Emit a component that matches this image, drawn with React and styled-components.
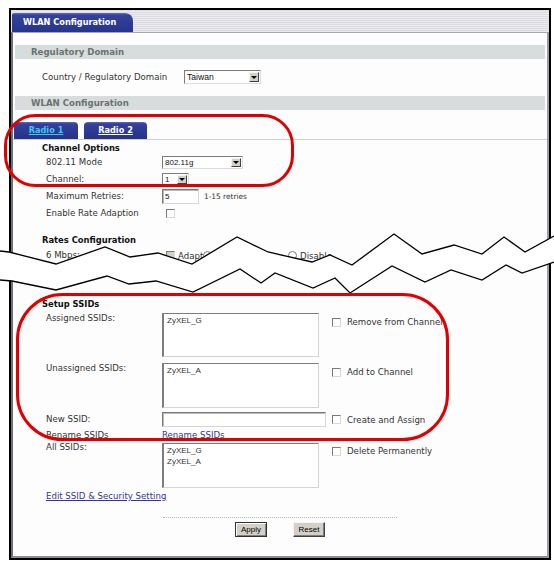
import styled, { createGlobalStyle } from 'styled-components';

const GlobalStyle = createGlobalStyle`
  html, body {
    margin: 0;
    padding: 0;
    background: #fff;
  }
  body {
    font-family: "DejaVu Sans", Verdana, sans-serif;
  }
`;

const Page = styled.div`
  position: relative;
  width: 554px;
  height: 562px;
  overflow: hidden;
  background: #fff;
  padding-top: 8px;
  box-sizing: border-box;
`;

const Frame = styled.div`
  margin-left: 9px;
  width: 542px;
  height: 552px;
  box-sizing: border-box;
  border: 2px solid #000;
  display: flex;
  flex-direction: column;
`;

const TabStrip = styled.div`
  height: 22px;
  flex: none;
  background: repeating-linear-gradient(#dcdce2 0 1px, #ebebef 1px 2px);
  display: flex;
  align-items: flex-end;
  padding-left: 1px;
`;

const MainTab = styled.div`
  width: 121px;
  height: 19px;
  box-sizing: border-box;
  padding-left: 11px;
  color: #fff;
  font-weight: bold;
  font-size: 8.2px;
  line-height: 19px;
  background: linear-gradient(#6671be 0, #35429c 2px, #27348b 100%);
  border-radius: 2px 8px 0 0;
`;

const Panel = styled.div`
  flex: 1;
  border-top: 1px solid #a8a8b0;
  border-left: 2px solid #6f6f78;
  border-right: 2px solid #9c9ca4;
  border-bottom: 2px solid #8c8c94;
  background: #fdfdfd;
  display: flex;
  flex-direction: column;
`;

const Band = styled.div`
  margin: ${(p) => p.$top}px 2px 0;
  height: 14px;
  line-height: 14px;
  padding-left: 16px;
  background: #d7dddd;
  color: #6b7272;
  font-weight: bold;
  font-size: 8.6px;
`;

const CountryRow = styled.div`
  margin-top: 11px;
  height: 14px;
  display: flex;
  align-items: center;
  padding-left: 29px;
`;

const Label = styled.span`
  width: ${(p) => p.$w || 116}px;
  flex: none;
  font-size: 8.6px;
  line-height: 11px;
  color: #333;
  white-space: nowrap;
  margin-top: ${(p) => p.$top || 0}px;
`;

const TabRow = styled.div`
  margin-top: 12px;
  height: 17px;
  display: flex;
  gap: 6px;
  padding-left: 1px;
  border-bottom: 1px solid #cfcfd4;
`;

const RadioTab = styled.div`
  width: ${(p) => p.$w}px;
  height: 17px;
  border-radius: 4px 4px 0 0;
  background: linear-gradient(#5f6ab8 0, #34409a 2px, #26338a 100%);
  color: ${(p) => (p.$active ? '#3cc6f4' : '#fff')};
  font-weight: bold;
  font-size: 8.2px;
  line-height: 17px;
  text-align: center;
  text-decoration: underline;
`;

const GroupTitle = styled.div`
  margin-top: ${(p) => p.$top}px;
  padding-left: 29px;
  font-weight: bold;
  font-size: 8.4px;
  line-height: 11px;
  color: #111;
`;

const FieldRow = styled.div`
  display: grid;
  grid-template-columns: 116px 170px 1fr;
  align-items: ${(p) => p.$align || 'center'};
  padding-left: 33px;
  height: ${(p) => p.$h}px;
  margin-top: ${(p) => p.$top || 0}px;
`;

const Value = styled.div`
  display: flex;
  align-items: center;
  gap: ${(p) => p.$gap || 0}px;
  padding-left: ${(p) => p.$pad || 0}px;
`;

const Select = styled.div`
  width: ${(p) => p.$w}px;
  height: ${(p) => p.$h}px;
  box-sizing: border-box;
  border: 1px solid;
  border-color: #7c7c7c #dcdcdc #dcdcdc #7c7c7c;
  background: #fff;
  display: flex;
  align-items: center;
  justify-content: space-between;
  padding-left: 2px;
  font-family: "Liberation Sans", Arial, sans-serif;
  font-size: ${(p) => p.$fs || 8}px;
  color: #111;
`;

const Arrow = styled.span`
  width: 10px;
  height: calc(100% - 2px);
  margin-right: 1px;
  box-sizing: border-box;
  background: #d4d0c8;
  border: 1px solid;
  border-color: #f4f4f4 #404040 #404040 #f4f4f4;
  display: flex;
  align-items: center;
  justify-content: center;

  &::after {
    content: '';
    border-left: 3px solid transparent;
    border-right: 3px solid transparent;
    border-top: 3px solid #000;
  }
`;

const TextBox = styled.div`
  width: ${(p) => p.$w}px;
  height: 15px;
  box-sizing: border-box;
  border: 1px solid;
  border-color: #7a7a7a #d6d6d6 #d6d6d6 #7a7a7a;
  box-shadow: inset 1px 1px 0 #b8b8b8;
  background: #fff;
  padding-left: 2px;
  font-family: "Liberation Sans", Arial, sans-serif;
  font-size: 8px;
  line-height: 13px;
  color: #111;
`;

const Hint = styled.span`
  font-size: 7.4px;
  color: #333;
`;

const Check = styled.span`
  width: 9px;
  height: 9px;
  flex: none;
  box-sizing: border-box;
  border: 1px solid;
  border-color: #7a7a7a #d8d8d8 #d8d8d8 #7a7a7a;
  background: ${(p) => (p.$off ? '#d4d0c8' : '#fff')};
  margin-top: ${(p) => p.$top || 0}px;
`;

const Radio = styled.span`
  width: 9px;
  height: 9px;
  flex: none;
  box-sizing: border-box;
  border-radius: 50%;
  border: 1px solid #7a7a7a;
  background: #fff;
`;

const OptText = styled.span`
  font-size: 8.6px;
  color: #333;
  white-space: nowrap;
  width: ${(p) => (p.$w ? `${p.$w}px` : 'auto')};
`;

const Option = styled.div`
  display: flex;
  align-items: center;
  gap: 6px;
  margin-top: ${(p) => p.$top || 0}px;
`;

const ListBox = styled.div`
  width: 157px;
  height: ${(p) => p.$h}px;
  box-sizing: border-box;
  border-style: solid;
  border-width: 1px 1px 1px 2px;
  border-color: #7c7c7c #d4d4d4 #d4d4d4 #7c7c7c;
  background: #fff;
  padding: 2px 3px;
  font-family: "Liberation Sans", Arial, sans-serif;
  font-size: 8px;
  line-height: 10.5px;
  color: #333;
`;

const Link = styled.a`
  font-size: 8.6px;
  line-height: 11px;
  color: #34349a;
  text-decoration: underline;
  white-space: nowrap;
`;

const EditRow = styled.div`
  margin-top: 0;
  padding-left: 33px;
  line-height: 11px;
`;

const Divider = styled.div`
  margin: 15px 0 0 150px;
  width: 234px;
  border-top: 1px dotted #b4b4b4;
`;

const ButtonRow = styled.div`
  margin-top: 4px;
  display: flex;
  justify-content: center;
  gap: 26px;
`;

const Button = styled.div`
  width: 32px;
  height: 15px;
  box-sizing: border-box;
  background: #d4d0c8;
  border: 1px solid;
  border-color: ${(p) => (p.$default ? '#303030' : '#f4f4f4 #404040 #404040 #f4f4f4')};
  box-shadow: ${(p) => (p.$default ? 'inset 1px 1px 0 #fff, inset -1px -1px 0 #808080' : 'inset -1px -1px 0 #808080')};
  font-family: "Liberation Sans", Arial, sans-serif;
  font-size: 8px;
  line-height: 13px;
  text-align: center;
  color: #000;
`;

const Overlay = styled.svg`
  position: absolute;
  left: 0;
  top: 0;
  pointer-events: none;
`;

const upper = [[0, 251], [9, 252], [56, 264], [105, 247], [130, 257], [158, 253], [192, 264], [237, 237], [268, 252], [312, 262], [330, 255], [352, 265], [394, 234], [422, 254], [454, 245], [482, 254], [504, 237], [525, 252], [554, 236]];
const lower = [[0, 280], [12, 281], [56, 290], [107, 276], [129, 284], [156, 281], [193, 292], [240, 269], [261, 283], [275, 273], [313, 288], [335, 278], [350, 293], [392, 266], [425, 282], [451, 270], [482, 280], [506, 265], [522, 273], [554, 262]];

const pts = (list) => list.map((p) => p.join(',')).join(' ');

function TornOverlay() {
  return (
    <Overlay width="554" height="562" viewBox="0 0 554 562">
      <polygon points={pts([...upper, ...[...lower].reverse()])} fill="#fff" />
      <polyline points={pts(upper)} fill="none" stroke="#000" strokeWidth="1.3" />
      <polyline points={pts(lower)} fill="none" stroke="#000" strokeWidth="1.3" />
      <rect x="5.5" y="115.5" width="287" height="70" rx="30" fill="none" stroke="#e10000" strokeWidth="3" />
      <rect x="17.5" y="294.5" width="430" height="145" rx="45" fill="none" stroke="#e10000" strokeWidth="3" />
    </Overlay>
  );
}

export default function App() {
  return (
    <>
      <GlobalStyle />
      <Page>
        <Frame>
          <TabStrip>
            <MainTab>WLAN Configuration</MainTab>
          </TabStrip>
          <Panel>
            <Band $top={12}>Regulatory Domain</Band>
            <CountryRow>
              <Label $w={142}>Country / Regulatory Domain</Label>
              <Select $w={77} $h={14} $fs={8.6}>Taiwan<Arrow /></Select>
            </CountryRow>
            <Band $top={12}>WLAN Configuration</Band>

            <TabRow>
              <RadioTab $w={64} $active>Radio 1</RadioTab>
              <RadioTab $w={63}>Radio 2</RadioTab>
            </TabRow>

            <GroupTitle $top={3}>Channel Options</GroupTitle>
            <FieldRow $h={17}>
              <Label>802.11 Mode</Label>
              <Select $w={81} $h={13}>802.11g<Arrow /></Select>
            </FieldRow>
            <FieldRow $h={17}>
              <Label>Channel:</Label>
              <Select $w={27} $h={13}>1<Arrow /></Select>
            </FieldRow>
            <FieldRow $h={17}>
              <Label>Maximum Retries:</Label>
              <Value $gap={5}>
                <TextBox $w={37}>5</TextBox>
                <Hint>1-15 retries</Hint>
              </Value>
            </FieldRow>
            <FieldRow $h={17}>
              <Label>Enable Rate Adaption</Label>
              <Value $pad={4}><Check /></Value>
            </FieldRow>

            <GroupTitle $top={13}>Rates Configuration</GroupTitle>
            <FieldRow $h={17} $top={1}>
              <Label>6 Mbps:</Label>
              <Value $pad={4} $gap={3}>
                <Check $off />
                <OptText $w={22}>Adapt</OptText>
                <Radio />
                <OptText $w={75}>Fixed 6 Mbps</OptText>
                <Radio />
                <OptText>Disable</OptText>
              </Value>
            </FieldRow>

            <GroupTitle $top={35}>Setup SSIDs</GroupTitle>
            <FieldRow $h={44} $top={3} $align="start">
              <Label>Assigned SSIDs:</Label>
              <ListBox $h={44}>ZyXEL_G</ListBox>
              <Option $top={4}><Check /><OptText>Remove from Channel</OptText></Option>
            </FieldRow>
            <FieldRow $h={45} $top={6} $align="start">
              <Label>Unassigned SSIDs:</Label>
              <ListBox $h={45}>ZyXEL_A</ListBox>
              <Option $top={4}><Check /><OptText>Add to Channel</OptText></Option>
            </FieldRow>
            <FieldRow $h={15} $top={4}>
              <Label>New SSID:</Label>
              <TextBox $w={164} />
              <Option><Check /><OptText>Create and Assign</OptText></Option>
            </FieldRow>
            <FieldRow $h={12} $top={2}>
              <Label>Rename SSIDs</Label>
              <Link>Rename SSIDs</Link>
            </FieldRow>
            <FieldRow $h={45} $top={2} $align="start">
              <Label $top={-1}>All SSIDs:</Label>
              <ListBox $h={45}>ZyXEL_G<br />ZyXEL_A</ListBox>
              <Option $top={3}><Check /><OptText>Delete Permanently</OptText></Option>
            </FieldRow>

            <EditRow><Link>Edit SSID &amp; Security Setting</Link></EditRow>
            <Divider />
            <ButtonRow>
              <Button $default>Apply</Button>
              <Button>Reset</Button>
            </ButtonRow>
          </Panel>
        </Frame>
        <TornOverlay />
      </Page>
    </>
  );
}
